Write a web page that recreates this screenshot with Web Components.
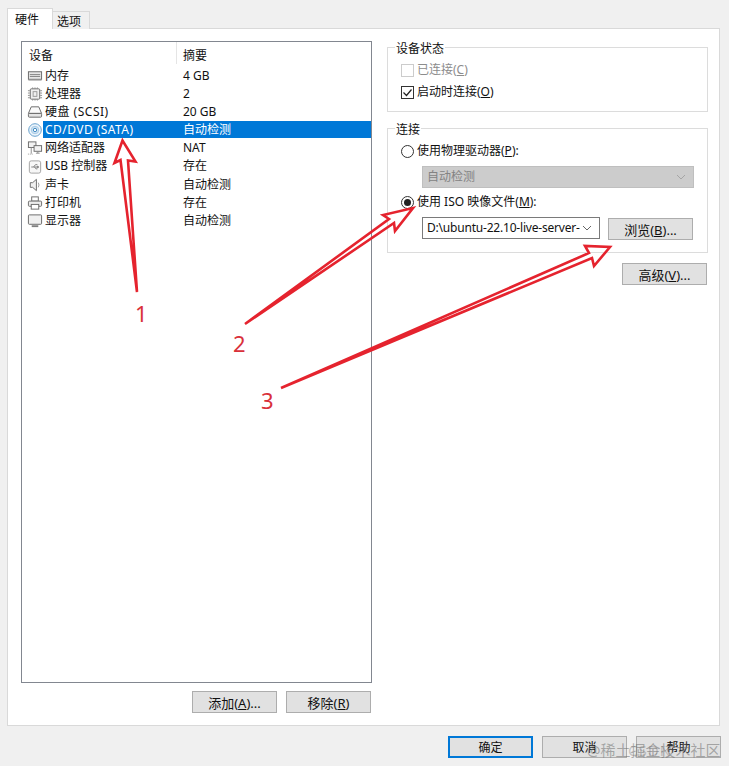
<!DOCTYPE html>
<html lang="zh">
<head>
<meta charset="utf-8">
<title>虚拟机设置</title>
<style>
    html, body {
        margin: 0;
        height: 100%;
        background: #f0f0f0;
        overflow: hidden;
    }
    body {
        font: 12px/16px "Noto Sans", "Noto Sans CJK SC", sans-serif;
        color: #111;
    }
    svg { display: block; }
</style>
</head>
<body>
<vm-dialog>
    <dialog-tab slot="tabs" active>硬件</dialog-tab>
    <dialog-tab slot="tabs">选项</dialog-tab>

    <device-list slot="left">
        <device-row>
            <svg slot="icon" width="17" height="16" viewBox="0 0 17 16" fill="none" stroke="#666"><rect x="1.500" y="3.500" width="14" height="8" fill="#e6e6e6"/><path d="M3 6.500h11M3 8.500h11" stroke="#808080"/><path d="M1.500 12.500h14" stroke="#aaa"/></svg>
            内存<span slot="summary">4 GB</span>
        </device-row>
        <device-row>
            <svg slot="icon" width="17" height="16" viewBox="0 0 17 16" fill="none" stroke="#6a6a6a"><rect x="3.500" y="2.500" width="10" height="11" rx="1" fill="#efefef"/><rect x="6.500" y="5.500" width="4" height="5" stroke="#999"/><path d="M1 4.500h2M1 7h2M1 9.500h2M1 12h2M14 4.500h2M14 7h2M14 9.500h2M14 12h2M6 1v1.500M8.500 1v1.500M11 1v1.500M6 13.500v1.500M8.500 13.500v1.500M11 13.500v1.500" stroke="#8c8c8c"/></svg>
            处理器<span slot="summary">2</span>
        </device-row>
        <device-row>
            <svg slot="icon" width="17" height="16" viewBox="0 0 17 16" fill="none" stroke="#666"><path d="M4.500 2.500h8l3 7h-14z" fill="#fafafa"/><rect x="1.500" y="9.500" width="14" height="4" rx="1" fill="#e4e4e4"/></svg>
            <span style="letter-spacing:.5px">硬盘 (SCSI)</span><span slot="summary">20 GB</span>
        </device-row>
        <device-row selected>
            <svg slot="icon" width="17" height="16" viewBox="0 0 17 16" fill="none"><circle cx="8.500" cy="8" r="6.700" fill="#eef5fb" stroke="#5f9ccb"/><circle cx="8.500" cy="8" r="4" fill="#cfe3f3" stroke="#a5c9e4"/><circle cx="8.500" cy="8" r="1.800" fill="#fff" stroke="#3d86bd"/></svg>
            <span style="letter-spacing:.45px">CD/DVD (SATA)</span><span slot="summary">自动检测</span>
        </device-row>
        <device-row>
            <svg slot="icon" width="17" height="16" viewBox="0 0 17 16" fill="none" stroke="#6a6a6a"><rect x="1.500" y="1.500" width="8" height="6" fill="#f2f2f2"/><rect x="7.500" y="5.500" width="8" height="6" fill="#f2f2f2"/><path d="M11.500 11.500v2M9.500 13.500h4M4.500 7.500v6.500" stroke="#8c8c8c"/><path d="M1 14.500h6" stroke="#999" stroke-dasharray="1 1"/></svg>
            网络适配器<span slot="summary">NAT</span>
        </device-row>
        <device-row>
            <svg slot="icon" width="17" height="16" viewBox="0 0 17 16" fill="none" stroke="#808080"><rect x="2.500" y="1.500" width="12" height="13" rx="2" fill="#f7f7f7" stroke="#a0a0a0"/><path d="M4.500 8h8M7 8l2-2.500h2M8 8l1.500 2h1.500M12.500 8l-1.500-1v2z"/></svg>
            USB 控制器<span slot="summary">存在</span>
        </device-row>
        <device-row>
            <svg slot="icon" width="17" height="16" viewBox="0 0 17 16" fill="none" stroke="#6a6a6a"><path d="M3.500 5.500h2.500l4-3.500v12l-4-3.500h-2.500z" fill="#f0f0f0"/><path d="M12 5.500q1.500 2.500 0 5" stroke="#999"/></svg>
            声卡<span slot="summary">自动检测</span>
        </device-row>
        <device-row>
            <svg slot="icon" width="17" height="16" viewBox="0 0 17 16" fill="none" stroke="#6a6a6a"><rect x="5" y="1.500" width="7" height="4.500" fill="#fff"/><rect x="1.500" y="6" width="14" height="5.500" rx="1" fill="#ececec"/><rect x="4.500" y="9.500" width="8" height="5" fill="#fff"/></svg>
            打印机<span slot="summary">存在</span>
        </device-row>
        <device-row>
            <svg slot="icon" width="17" height="16" viewBox="0 0 17 16" fill="none" stroke="#666"><rect x="1.500" y="1.500" width="14" height="10" rx="1" fill="#f0f0f0"/><path d="M5 13.500h7" stroke-width="2" stroke="#808080"/></svg>
            显示器<span slot="summary">自动检测</span>
        </device-row>
    </device-list>

    <win-button slot="left-actions" large>添加(<u>A</u>)...</win-button>
    <win-button slot="left-actions" large>移除(<u>R</u>)</win-button>

    <group-box slot="right" title="设备状态" style="height:65px">
        <win-check type="checkbox" disabled style="margin-top:5px">已连接(<u>C</u>)</win-check>
        <win-check type="checkbox" checked style="margin-top:6px">启动时连接(<u>O</u>)</win-check>
    </group-box>

    <group-box slot="right" title="连接" style="height:125px;margin-top:16px">
        <win-check type="radio" style="margin-top:5px">使用物理驱动器(<u>P</u>):</win-check>
        <win-combo disabled style="width:272px;margin:7px 0 0 21px">自动检测</win-combo>
        <win-check type="radio" checked style="margin-top:6px">使用 ISO 映像文件(<u>M</u>):</win-check>
        <file-row>
            <win-combo style="width:178px;letter-spacing:-.2px">D:\ubuntu-22.10-live-server-</win-combo>
            <win-button large style="margin-top:1px">浏览(<u>B</u>)...</win-button>
        </file-row>
    </group-box>

    <win-button slot="right-actions" large>高级(<u>V</u>)...</win-button>

    <win-button slot="footer" default>确定</win-button>
    <win-button slot="footer">取消</win-button>
    <win-button slot="footer">帮助</win-button>
</vm-dialog>
<arrow-overlay></arrow-overlay>

<script>
class VmDialog extends HTMLElement {
    constructor() {
        super();
        const template = document.createElement('template');
        template.innerHTML = `
    <style>
        :host {
            display: block;
            width: 729px;
            height: 766px;
            box-sizing: border-box;
            padding: 8px 8px 0 7px;
        }
        .tabs {
            display: flex;
            align-items: flex-end;
            height: 21px;
            position: relative;
            z-index: 1;
        }
        .panel {
            box-sizing: border-box;
            width: 713px;
            height: 698px;
            margin-top: -1px;
            padding: 12px 0 0 13px;
            background: #fff;
            border: 1px solid #d9d9d9;
            display: grid;
            grid-template-columns: 351px 321px;
            column-gap: 15px;
        }
        .left {
            display: flex;
            flex-direction: column;
        }
        .left-actions {
            display: flex;
            justify-content: flex-end;
            gap: 9px;
            margin: 8px 1px 0 0;
        }
        .right {
            padding-top: 6px;
        }
        .right-actions {
            display: flex;
            justify-content: flex-end;
            margin: 10px 1px 0 0;
        }
        .footer {
            display: flex;
            justify-content: flex-end;
            gap: 9px;
            margin-top: 10px;
        }
    </style>
    <div class="tabs"><slot name="tabs"></slot></div>
    <div class="panel">
        <div class="left">
            <slot name="left"></slot>
            <div class="left-actions"><slot name="left-actions"></slot></div>
        </div>
        <div class="right">
            <slot name="right"></slot>
            <div class="right-actions"><slot name="right-actions"></slot></div>
        </div>
    </div>
    <div class="footer"><slot name="footer"></slot></div>
    `;
        this.attachShadow({ mode: 'open' });
        this.shadowRoot.appendChild(template.content.cloneNode(true));
    }
}

class DialogTab extends HTMLElement {
    constructor() {
        super();
        const template = document.createElement('template');
        template.innerHTML = `
    <style>
        :host {
            display: block;
            box-sizing: border-box;
            height: 18px;
            width: 38px;
            margin-left: -1px;
            padding-left: 4px;
            line-height: 19px;
            background: #f0f0f0;
            border: 1px solid #d9d9d9;
            border-bottom: 0;
        }
        :host([active]) {
            height: 21px;
            width: 46px;
            margin-left: 0;
            padding-left: 7px;
            line-height: 21px;
            background: #fff;
        }
    </style>
    <slot></slot>
    `;
        this.attachShadow({ mode: 'open' });
        this.shadowRoot.appendChild(template.content.cloneNode(true));
    }
}

class DeviceList extends HTMLElement {
    constructor() {
        super();
        const template = document.createElement('template');
        template.innerHTML = `
    <style>
        :host {
            display: block;
            box-sizing: border-box;
            height: 642px;
            background: #fff;
            border: 1px solid #828790;
        }
        .head {
            display: grid;
            grid-template-columns: 154px 1fr;
            height: 25px;
            line-height: 28px;
        }
        .head div { padding-left: 7px; }
        .head div + div {
            padding-left: 6px;
            border-left: 1px solid #e5e5e5;
            height: 22px;
        }
    </style>
    <div class="head"><div>设备</div><div>摘要</div></div>
    <slot></slot>
    `;
        this.attachShadow({ mode: 'open' });
        this.shadowRoot.appendChild(template.content.cloneNode(true));
    }
}

class DeviceRow extends HTMLElement {
    constructor() {
        super();
        const template = document.createElement('template');
        template.innerHTML = `
    <style>
        :host {
            display: grid;
            grid-template-columns: 16px 133px 1fr;
            height: 18.1px;
            line-height: 18px;
            padding-left: 5px;
        }
        .icon {
            display: flex;
            align-items: center;
        }
        .name { padding-left: 2px; white-space: nowrap; }
        .summary { padding-left: 7px; }
        :host([selected]) .name,
        :host([selected]) .summary {
            background: #0078d7;
            color: #fff;
            height: 17px;
        }
    </style>
    <div class="icon"><slot name="icon"></slot></div>
    <div class="name"><slot></slot></div>
    <div class="summary"><slot name="summary"></slot></div>
    `;
        this.attachShadow({ mode: 'open' });
        this.shadowRoot.appendChild(template.content.cloneNode(true));
    }
}

class GroupBox extends HTMLElement {
    constructor() {
        super();
        const template = document.createElement('template');
        template.innerHTML = `
    <style>
        :host {
            display: block;
            box-sizing: border-box;
            border: 1px solid #dcdcdc;
            padding: 0 13px;
        }
        .title {
            width: fit-content;
            height: 16px;
            margin: -7px 0 0 -6px;
            padding: 0 1px;
            background: #fff;
        }
    </style>
    <div class="title"></div>
    <slot></slot>
    `;
        this.attachShadow({ mode: 'open' });
        this.shadowRoot.appendChild(template.content.cloneNode(true));
    }

    connectedCallback() {
        this.shadowRoot.querySelector('.title').textContent = this.getAttribute('title');
        this.removeAttribute('title');
    }
}

class WinCheck extends HTMLElement {
    constructor() {
        super();
        const template = document.createElement('template');
        template.innerHTML = `
    <style>
        :host {
            display: flex;
            align-items: center;
            gap: 3px;
            height: 16px;
        }
        :host([disabled]) { color: #8c8c8c; }
        svg { display: block; flex: none; }
    </style>
    <span class="mark"></span>
    <span><slot></slot></span>
    `;
        this.attachShadow({ mode: 'open' });
        this.shadowRoot.appendChild(template.content.cloneNode(true));
    }

    connectedCallback() {
        const checked = this.hasAttribute('checked');
        const disabled = this.hasAttribute('disabled');
        const edge = disabled ? '#cccccc' : '#333333';
        const mark = this.shadowRoot.querySelector('.mark');
        if (this.getAttribute('type') === 'radio') {
            mark.innerHTML = `<svg width="13" height="13" viewBox="0 0 13 13"><circle cx="6.500" cy="6.500" r="6" fill="#fff" stroke="${edge}"/>${checked ? '<circle cx="6.500" cy="6.500" r="3.500" fill="#222"/>' : ''}</svg>`;
        } else {
            mark.innerHTML = `<svg width="13" height="13" viewBox="0 0 13 13"><rect x=".5" y=".5" width="12" height="12" fill="#fff" stroke="${edge}"/>${checked ? '<path d="M2.500 6.500l3 3 5-6" fill="none" stroke="#222" stroke-width="1.200"/>' : ''}</svg>`;
        }
    }
}

class WinCombo extends HTMLElement {
    constructor() {
        super();
        const template = document.createElement('template');
        template.innerHTML = `
    <style>
        :host {
            display: flex;
            align-items: center;
            justify-content: space-between;
            box-sizing: border-box;
            height: 22px;
            padding: 0 7px 0 4px;
            background: #fff;
            border: 1px solid #7a7a7a;
            white-space: nowrap;
            overflow: hidden;
        }
        :host([disabled]) {
            background: #cccccc;
            border-color: #bfbfbf;
            color: #838383;
        }
        svg { flex: none; margin-left: 2px; }
    </style>
    <span><slot></slot></span>
    <svg width="10" height="6" viewBox="0 0 10 6" fill="none" stroke="#666"><path d="M1 1l4 4 4-4"/></svg>
    `;
        this.attachShadow({ mode: 'open' });
        this.shadowRoot.appendChild(template.content.cloneNode(true));
    }

    connectedCallback() {
        if (this.hasAttribute('disabled')) {
            this.shadowRoot.querySelector('svg').setAttribute('stroke', '#a5a5a5');
        }
    }
}

class FileRow extends HTMLElement {
    constructor() {
        super();
        const template = document.createElement('template');
        template.innerHTML = `
    <style>
        :host {
            display: flex;
            align-items: flex-start;
            gap: 8px;
            margin: 7px 0 0 21px;
        }
    </style>
    <slot></slot>
    `;
        this.attachShadow({ mode: 'open' });
        this.shadowRoot.appendChild(template.content.cloneNode(true));
    }
}

class WinButton extends HTMLElement {
    constructor() {
        super();
        const template = document.createElement('template');
        template.innerHTML = `
    <style>
        :host {
            display: flex;
            align-items: center;
            justify-content: center;
            box-sizing: border-box;
            width: 85px;
            height: 22px;
            padding-top: 1px;
            background: #e1e1e1;
            border: 1px solid #adadad;
        }
        :host([large]) {
            font-size: 13px;
        }
        :host([default]) {
            border: 2px solid #0078d7;
        }
    </style>
    <slot></slot>
    `;
        this.attachShadow({ mode: 'open' });
        this.shadowRoot.appendChild(template.content.cloneNode(true));
    }
}

// red hand-drawn arrows and the image watermark lie over the dialog
class ArrowOverlay extends HTMLElement {
    constructor() {
        super();
        const template = document.createElement('template');
        template.innerHTML = `
    <style>
        :host {
            position: absolute;
            left: 0;
            top: 0;
            width: 729px;
            height: 766px;
            pointer-events: none;
        }
        svg { position: absolute; left: 0; top: 0; }
        .num {
            position: absolute;
            font: 22px/26px "Noto Sans", sans-serif;
            color: #d9303a;
        }
        .mark {
            position: absolute;
            left: 587px;
            top: 740px;
            font: 15px/20px "Noto Sans", "Noto Sans CJK SC", sans-serif;
            color: rgba(110, 110, 110, 0.55);
            white-space: nowrap;
        }
        .mark.second {
            left: 628px;
            letter-spacing: 1px;
            color: rgba(110, 110, 110, 0.35);
        }
    </style>
    <svg width="729" height="766" viewBox="0 0 729 766" fill="none" stroke="#e5232e" stroke-width="2.600" stroke-linejoin="miter">
        <path d="M137 292 L120.500 160 L114.500 163 L122.500 140.500 L135.500 161.500 L128 160.500 Z"/>
        <path d="M245 324 L389 219 L383 215 L413 208 L395 231 L394 223 Z"/>
        <path d="M281 388 L589 253 L585 246 L610 247 L594 266 L592 258 Z"/>
    </svg>
    <span class="num" style="left:135px;top:300px">1</span>
    <span class="num" style="left:233px;top:330px">2</span>
    <span class="num" style="left:261px;top:387px">3</span>
    <span class="mark">@稀土掘金技术社区</span>
    <span class="mark second">CSDN</span>
    `;
        this.attachShadow({ mode: 'open' });
        this.shadowRoot.appendChild(template.content.cloneNode(true));
    }
}

customElements.define('vm-dialog', VmDialog);
customElements.define('dialog-tab', DialogTab);
customElements.define('device-list', DeviceList);
customElements.define('device-row', DeviceRow);
customElements.define('group-box', GroupBox);
customElements.define('win-check', WinCheck);
customElements.define('win-combo', WinCombo);
customElements.define('file-row', FileRow);
customElements.define('win-button', WinButton);
customElements.define('arrow-overlay', ArrowOverlay);
</script>
</body>
</html>
